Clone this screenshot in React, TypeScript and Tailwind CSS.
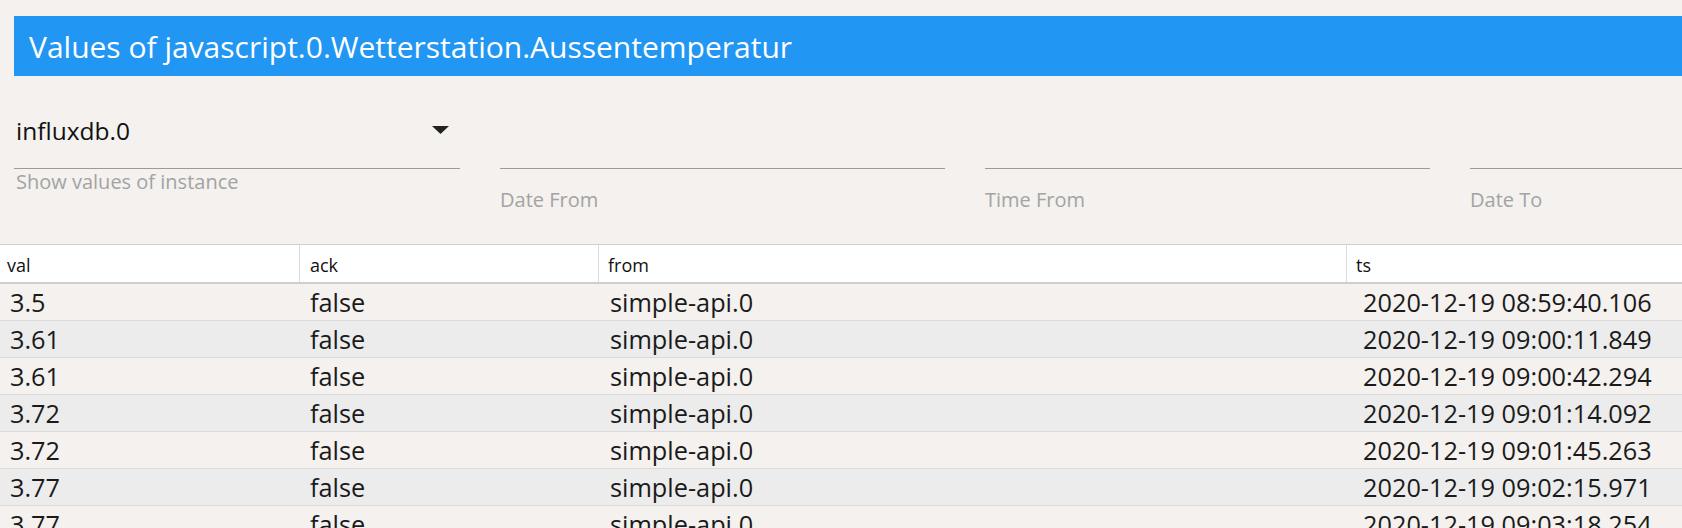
const rows = [
  { val: "3.5", ack: "false", from: "simple-api.0", ts: "2020-12-19 08:59:40.106" },
  { val: "3.61", ack: "false", from: "simple-api.0", ts: "2020-12-19 09:00:11.849" },
  { val: "3.61", ack: "false", from: "simple-api.0", ts: "2020-12-19 09:00:42.294" },
  { val: "3.72", ack: "false", from: "simple-api.0", ts: "2020-12-19 09:01:14.092" },
  { val: "3.72", ack: "false", from: "simple-api.0", ts: "2020-12-19 09:01:45.263" },
  { val: "3.77", ack: "false", from: "simple-api.0", ts: "2020-12-19 09:02:15.971" },
  { val: "3.77", ack: "false", from: "simple-api.0", ts: "2020-12-19 09:03:18.254" },
]

function DateField({ label }: { label: string }) {
  return (
    <div className="w-[445px] shrink-0">
      <div className="h-[69px] border-b border-[#9e9a98]" />
      <div className="mt-[20px] text-[20px] leading-[21px] text-[#a3a3a3]">{label}</div>
    </div>
  )
}

export default function App() {
  return (
    <div className="w-[1682px] h-[528px] overflow-hidden bg-[#f4f1ee] font-['Open_Sans',sans-serif]">
      <div className="pt-4 pl-[14px]">
        <div className="h-[60px] bg-[#2196f3] text-white text-[30px] flex items-center pl-[15px]">
          Values of javascript.0.Wetterstation.Aussentemperatur
        </div>
      </div>

      <div className="h-[168px] pt-6 pl-[14px] flex gap-[40px]">
        <div className="w-[446px] shrink-0">
          <div className="h-[69px] border-b border-[#9e9a98] flex items-center justify-between pr-[11px] pb-[8px] pl-[2px]">
            <span className="text-[24.5px] leading-[33px] text-[#111]">influxdb.0</span>
            <svg width="17" height="8" viewBox="0 0 17 8" className="text-[#222]">
              <path d="M0 0h17L8.5 8z" fill="currentColor" />
            </svg>
          </div>
          <div className="mt-[2px] text-[20px] leading-[21px] text-[#a3a3a3] pl-[2px]">Show values of instance</div>
        </div>
        <DateField label="Date From" />
        <DateField label="Time From" />
        <DateField label="Date To" />
      </div>

      <div className="w-[1682px]">
        <div className="flex bg-white border-t border-b-2 border-[#cfcfcf] text-[18px] text-[#111] h-[40px]">
          <div className="w-[300px] pl-[7px] pt-[4px] flex items-center border-r border-[#dcdcdc]">val</div>
          <div className="w-[299px] pl-[10px] pt-[4px] flex items-center border-r border-[#dcdcdc]">ack</div>
          <div className="w-[748px] pl-[9px] pt-[4px] flex items-center border-r border-[#dcdcdc]">from</div>
          <div className="flex-1 pl-[9px] pt-[4px] flex items-center">ts</div>
        </div>
        {rows.map((r, i) => (
          <div
            key={i}
            className={
              "flex h-[37px] border-b border-[#dadada] text-[25.3px] leading-[36px] text-[#1a1a1a] " +
              (i % 2 === 1 ? "bg-[#ececec]" : "bg-[#f4f1ee]")
            }
          >
            <div className="w-[300px] pl-[10px]">{r.val}</div>
            <div className="w-[299px] pl-[10px]">{r.ack}</div>
            <div className="w-[748px] pl-[11px]">{r.from}</div>
            <div className="flex-1 pl-[16px]">{r.ts}</div>
          </div>
        ))}
      </div>
    </div>
  )
}
